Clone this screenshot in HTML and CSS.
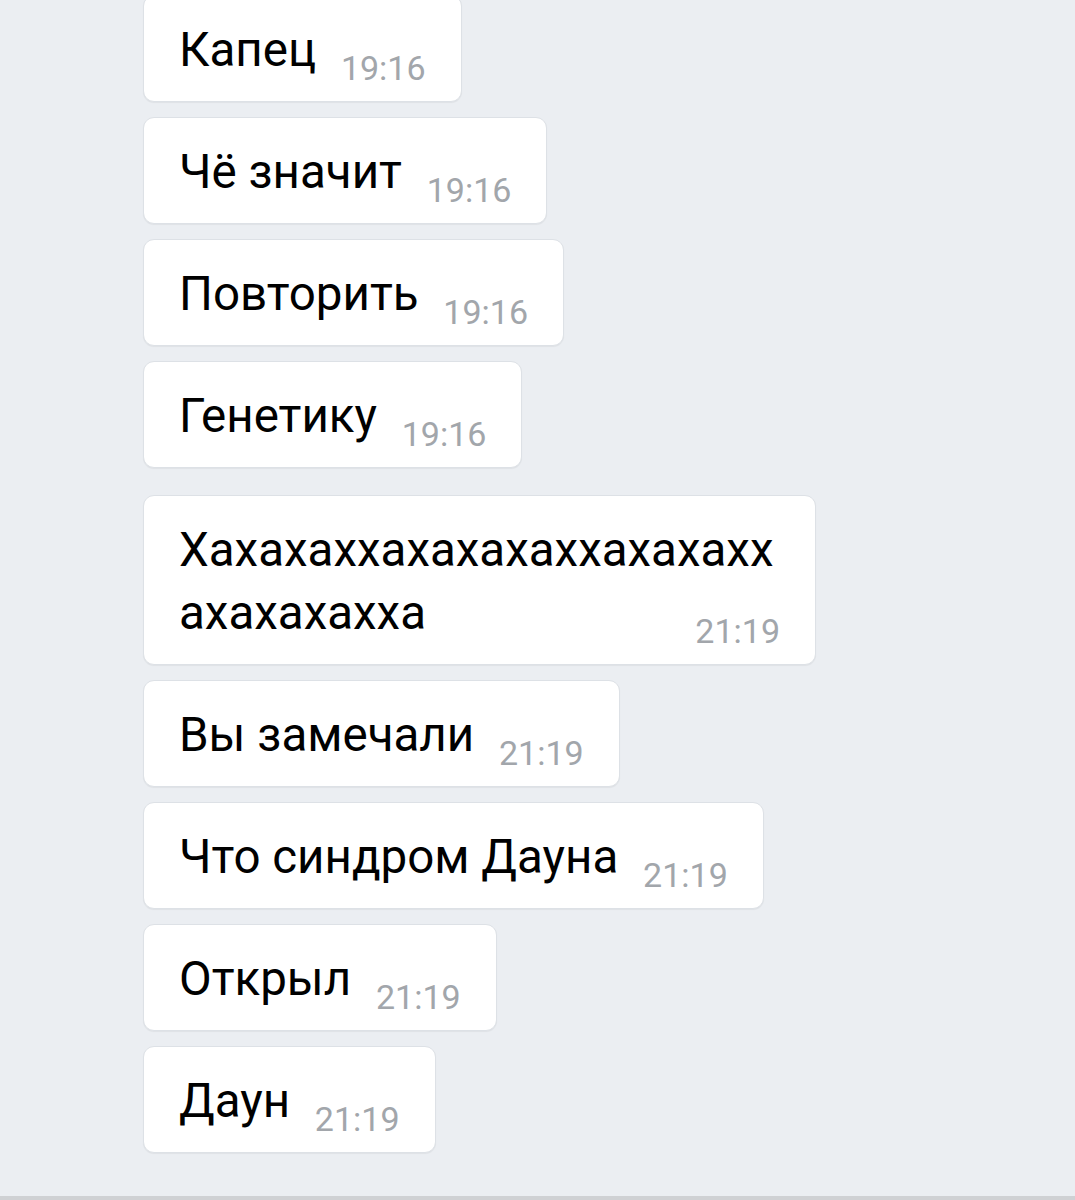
FILE: index.html
```html
<!DOCTYPE html>
<html lang="ru">
<head>
  <meta charset="UTF-8">
  <meta name="viewport" content="width=device-width, initial-scale=1.0">
  <title>Сообщения</title>
  <link rel="stylesheet" href="styles.css">
</head>
<body>
  <div class="screen">
    <div class="chat">
      <div class="bubble">Капец <span class="time">19:16</span></div>
      <div class="bubble">Чё значит <span class="time">19:16</span></div>
      <div class="bubble">Повторить <span class="time">19:16</span></div>
      <div class="bubble">Генетику <span class="time">19:16</span></div>

      <div class="bubble bubble--group bubble--wrap">Хахахаххахахахаххахахаххахахахахха <span class="time">21:19</span></div>
      <div class="bubble">Вы замечали <span class="time">21:19</span></div>
      <div class="bubble">Что синдром Дауна <span class="time">21:19</span></div>
      <div class="bubble">Открыл <span class="time">21:19</span></div>
      <div class="bubble">Даун <span class="time">21:19</span></div>
    </div>
    <div class="divider"></div>
  </div>
</body>
</html>
```

FILE: styles.css
```css
body {
  margin: 0;
  padding: 0;
  font-family: 'Roboto', 'Noto Sans', sans-serif;
  background-color: #ebeef2;
}

.screen {
  height: 1200px;
  display: flex;
  flex-direction: column;
  overflow: hidden;
}

.chat {
  flex: 1;
  display: flex;
  flex-direction: column;
  align-items: flex-start;
  gap: 15px;
  margin-top: -5px;
  padding-left: 143px;
}

.bubble {
  box-sizing: border-box;
  max-width: 673px;
  padding: 23px 35px 16px;
  background: #fff;
  border: 1px solid #dde1e6;
  border-radius: 11px;
  box-shadow: 0 1px 1px rgba(0, 0, 0, 0.05);
  font-size: 47.5px;
  line-height: 63px;
  color: #000;
  word-break: break-all;
}

.bubble--group {
  margin-top: 12px;
}

.bubble--wrap {
  text-align-last: justify;
}

.time {
  display: inline-block;
  margin-left: 13px;
  font-size: 34px;
  line-height: 1;
  vertical-align: -14px;
  color: #a2a6ab;
}

.divider {
  height: 4px;
  background-color: #cfd1d4;
}
```
